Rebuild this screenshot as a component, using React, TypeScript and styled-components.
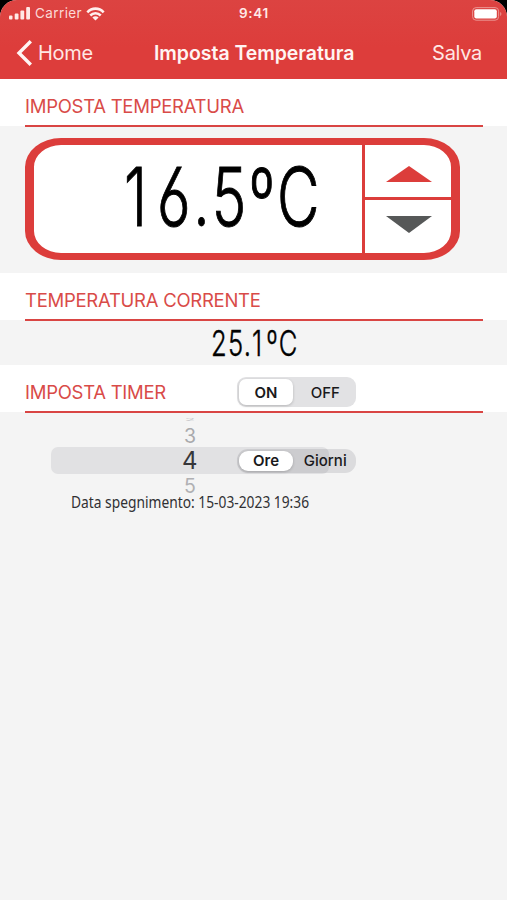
import React from "react";
import styled, { createGlobalStyle } from "styled-components";

const RED = "#dc3d3b";

const GlobalStyle = createGlobalStyle`
  * { box-sizing: border-box; }
  html, body { margin: 0; background: #000; }
  body { font-family: Inter, "Liberation Sans", sans-serif; }
`;

const Screen = styled.div`
  width: 507px;
  height: 900px;
  overflow: hidden;
  background: #f4f4f4;
  border-radius: 17px 17px 0 0;
`;

const Header = styled.header`
  height: 79px;
  background: linear-gradient(#dc4341, #dd3d3b 60%);
  color: #fff;
`;

const StatusBar = styled.div`
  display: grid;
  grid-template-columns: 1fr auto 1fr;
  align-items: center;
  height: 27px;
  padding: 0 6px 0 9px;
  font-size: 13.5px;
  line-height: 27px;
`;

const Carrier = styled.div`
  display: flex;
  align-items: center;
  gap: 4px;
  color: #fbd9d6;
  letter-spacing: 0.4px;
`;

const Clock = styled.div`
  font-weight: 600;
  font-size: 13.5px;
  letter-spacing: 0.7px;
  margin-left: -2px;
  color: #ffe9e7;
`;

const BatterySlot = styled.div`
  display: flex;
  justify-content: flex-end;
  margin-right: -2px;
`;

const NavBar = styled.nav`
  display: grid;
  grid-template-columns: 138px 1fr auto;
  align-items: center;
  height: 52px;
  padding: 0 25px 0 16px;
  font-size: 20px;
  line-height: 51px;
`;

const NavLink = styled.div`
  display: flex;
  align-items: center;
  gap: 6px;
  letter-spacing: -0.3px;
  color: #ffe7e4;
`;

const NavTitle = styled.div`
  font-weight: 600;
  font-size: 19.5px;
  letter-spacing: -0.05px;
  padding-top: 1px;
  color: #fff4f2;
`;

const SectionHead = styled.div`
  display: flex;
  height: 48px;
  padding: 0 24px 0 25px;
  background: linear-gradient(#fff calc(100% - 1px), #f4f4f4 0);
`;

const SectionRule = styled.div`
  display: flex;
  align-items: center;
  flex: 1;
  padding-top: 8px;
  border-bottom: 2px solid #d94543;
`;

const SectionTitle = styled.h2<{ $width?: number }>`
  margin: 0;
  width: ${(p) => (p.$width ? `${p.$width}px` : "auto")};
  font-size: 18.5px;
  font-weight: 400;
  line-height: 24px;
  letter-spacing: -0.27px;
  color: #d94b48;
  white-space: nowrap;
`;

const SetPanel = styled.section`
  height: 146px;
  padding: 11px 0 0 24.5px;
`;

const Thermostat = styled.div`
  display: flex;
  width: 435.5px;
  height: 122px;
  border: solid ${RED};
  border-width: 7px 9.5px;
  border-radius: 36px / 29px;
  background: #fff;
`;

const Display = styled.div`
  display: flex;
  justify-content: flex-end;
  align-items: center;
  width: 328px;
  padding: 0 39px 3px 0;
`;

const Condensed = styled.span<{ $size: number; $scale: number; $origin?: string }>`
  display: block;
  font-size: ${(p) => p.$size}px;
  line-height: 1;
  white-space: nowrap;
  transform: scaleX(${(p) => p.$scale});
  transform-origin: ${(p) => p.$origin ?? "center"};
`;

const Reading = styled(Condensed)`
  font-weight: 300;
  font-feature-settings: "ss01", "calt" 0;
  letter-spacing: 0.048em;
  -webkit-text-stroke: 0.012em #000;
`;

const NarrowDigit = styled.span`
  letter-spacing: 0.17em;
`;

const CondensedText = styled(Condensed)`
  font-family: "Noto Sans", sans-serif;
`;

const Stepper = styled.div`
  display: grid;
  grid-template-rows: 55px 1fr;
  flex: 1;
  border-left: 3px solid ${RED};
`;

const StepButton = styled.button<{ $down?: boolean }>`
  display: flex;
  justify-content: center;
  align-items: ${(p) => (p.$down ? "flex-start" : "flex-end")};
  padding: ${(p) => (p.$down ? "16px 0 0 3px" : "0 0 15px 3px")};
  border: 0;
  border-bottom: ${(p) => (p.$down ? "0" : `3px solid ${RED}`)};
  background: none;
`;

const Current = styled.section`
  display: flex;
  justify-content: center;
  align-items: center;
  height: 44px;
  padding: 1px 0 0 2px;
`;

const Segmented = styled.div<{ $compact?: boolean }>`
  display: grid;
  grid-template-columns: 1fr 1fr;
  width: 119px;
  height: ${(p) => (p.$compact ? 24 : 30)}px;
  padding: 2px;
  background: ${(p) => (p.$compact ? "rgba(118,118,128,.2)" : "#e2e2e4")};
  border-radius: ${(p) => (p.$compact ? 11 : 9)}px;
`;

const Segment = styled.div<{ $active?: boolean; $compact?: boolean }>`
  display: flex;
  align-items: center;
  justify-content: center;
  width: ${(p) => (p.$active ? "54px" : "auto")};
  border-radius: ${(p) => (p.$compact ? 9 : 7)}px;
  background: ${(p) => (p.$active ? "#fff" : "none")};
  box-shadow: ${(p) => (p.$active ? "0 1px 3px rgba(0,0,0,.2)" : "none")};
  color: #19191b;
  font-size: 15px;
  font-weight: ${(p) => (p.$active ? 600 : 500)};
`;

const TimerPanel = styled.section`
  display: grid;
  grid-template-rows: 80px 22px;
`;

const PickerRow = styled.div`
  display: grid;
  grid-template-columns: 51px 278px;
  grid-template-rows: 34px 27px 18px;
`;

const Faded = styled.div<{ $color: string; $shift: number }>`
  grid-column: 2;
  padding-top: ${(p) => p.$shift}px;
  font-size: 19.5px;
  line-height: 20px;
  text-align: center;
  color: ${(p) => p.$color};
`;

const FarValue = styled.div`
  height: 9px;
  font-size: 17px;
  line-height: 9px;
  color: #c4c4c7;
  transform: scaleY(0.2);
  transform-origin: center 3px;
`;

const Selected = styled.div`
  grid-column: 2;
  display: grid;
  grid-template-columns: 186px 119px;
  align-items: center;
  border-radius: 7px;
  background: #e1e1e3;
`;

const SelectedValue = styled.div`
  padding-left: 131px;
  font-size: 24px;
  line-height: 27px;
  color: #37373a;
`;

const ShutdownDate = styled.div`
  padding-left: 71px;
  color: #303033;
`;

const SignalIcon = () => (
  <svg width="22" height="13" viewBox="0 0 22 13" fill="#ffe9e6">
    <rect x="0" y="8.5" width="3.5" height="4" rx="1" />
    <rect x="5.7" y="6.5" width="3.8" height="6" rx="1" />
    <rect x="11.4" y="3.5" width="3.8" height="9" rx="1" />
    <rect x="17.2" y="0" width="3.8" height="12.5" rx="1" />
  </svg>
);

const WifiIcon = () => (
  <svg width="19" height="14" viewBox="0 0 20 14" fill="none" stroke="#fff0ee" strokeWidth="2.7">
    <path d="M1.4 5.2C6.2.1 13.8.1 18.6 5.2" />
    <path d="M4.5 8.6c3.1-3.1 7.9-3.1 11 0" />
    <path d="M10 13.8 6.7 10.6c1.8-1.7 4.8-1.7 6.6 0Z" fill="#fff0ee" stroke="none" />
  </svg>
);

const BatteryIcon = () => (
  <svg width="31" height="14" viewBox="0 0 31 14">
    <rect x=".6" y=".6" width="26" height="12.6" rx="3.5" fill="none" stroke="#eb9491" />
    <rect x="2.3" y="2.2" width="22.5" height="9.4" rx="2" fill="#fff" />
    <path d="M28.2 5v4c1.6-.5 1.6-3.5 0-4Z" fill="#eb9491" />
  </svg>
);

const BackIcon = () => (
  <svg width="16" height="26" viewBox="0 0 16 26" fill="none" stroke="#fff5f3" strokeWidth="3.4">
    <path d="M14.8 1.2 3 13l11.8 11.8" />
  </svg>
);

export default function App() {
  return (
    <>
      <GlobalStyle />
      <Screen>
        <Header>
          <StatusBar>
            <Carrier>
              <SignalIcon />
              <span>Carrier</span>
              <WifiIcon />
            </Carrier>
            <Clock>9:41</Clock>
            <BatterySlot><BatteryIcon /></BatterySlot>
          </StatusBar>
          <NavBar>
            <NavLink><BackIcon />Home</NavLink>
            <NavTitle>Imposta Temperatura</NavTitle>
            <NavLink>Salva</NavLink>
          </NavBar>
        </Header>
        <SectionHead>
          <SectionRule><SectionTitle>IMPOSTA TEMPERATURA</SectionTitle></SectionRule>
        </SectionHead>
        <SetPanel>
          <Thermostat>
            <Display>
              <Reading $size={81} $scale={0.72} $origin="right"><NarrowDigit>1</NarrowDigit>6.5ºC</Reading>
            </Display>
            <Stepper>
              <StepButton aria-label="Aumenta">
                <svg width="46" height="16" viewBox="0 0 46 16"><path d="M0 16 23 0l23 16Z" fill={RED} /></svg>
              </StepButton>
              <StepButton $down aria-label="Diminuisci">
                <svg width="46" height="17" viewBox="0 0 46 17"><path d="M0 0h46L23 17Z" fill="#565858" /></svg>
              </StepButton>
            </Stepper>
          </Thermostat>
        </SetPanel>
        <SectionHead>
          <SectionRule><SectionTitle>TEMPERATURA CORRENTE</SectionTitle></SectionRule>
        </SectionHead>
        <Current>
          <Reading $size={35.5} $scale={0.72}>25.<NarrowDigit>1</NarrowDigit>ºC</Reading>
        </Current>
        <SectionHead>
          <SectionRule>
            <SectionTitle $width={212}>IMPOSTA TIMER</SectionTitle>
            <Segmented>
              <Segment $active>ON</Segment>
              <Segment>OFF</Segment>
            </Segmented>
          </SectionRule>
        </SectionHead>
        <TimerPanel>
          <PickerRow>
            <Faded $color="#a9a9ac" $shift={4}><FarValue>2</FarValue>3</Faded>
            <Selected>
              <SelectedValue>4</SelectedValue>
              <Segmented $compact>
                <Segment $active $compact>Ore</Segment>
                <Segment $compact>Giorni</Segment>
              </Segmented>
            </Selected>
            <Faded $color="#b0b0b3" $shift={2}>5</Faded>
          </PickerRow>
          <ShutdownDate>
            <CondensedText $size={17} $scale={0.811} $origin="left">Data spegnimento: 15-03-2023 19:36</CondensedText>
          </ShutdownDate>
        </TimerPanel>
      </Screen>
    </>
  );
}
